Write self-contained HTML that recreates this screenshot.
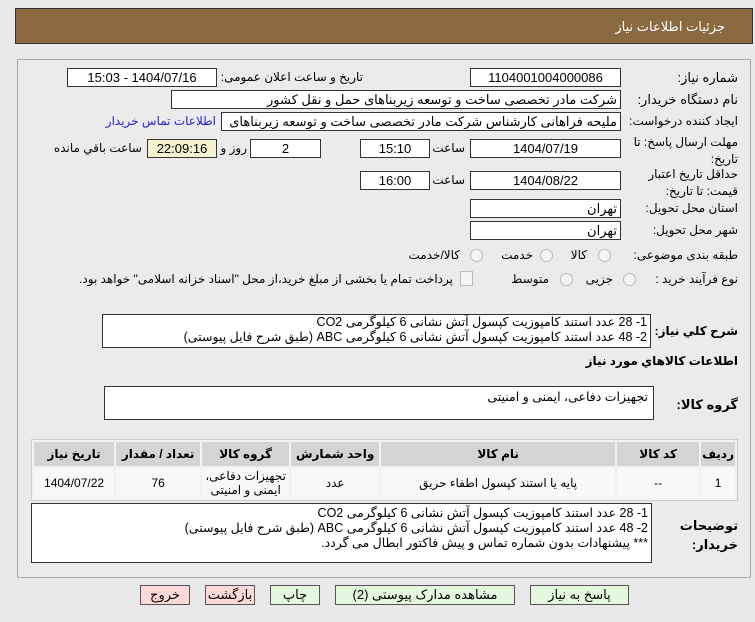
<!DOCTYPE html>
<html><head><meta charset="utf-8"><style>
body{margin:0;width:755px;height:622px;background:#e9e9e9;font-family:"Liberation Sans","DejaVu Sans",sans-serif;font-size:12px;color:#000;position:relative;overflow:hidden;direction:rtl}
.a{position:absolute;white-space:nowrap}
.in{position:absolute;background:#fff;border:1px solid #333;box-sizing:border-box;height:19px;line-height:17px;text-align:center;font-size:13px}
.l{position:absolute;white-space:nowrap;text-align:right;font-size:12px}
.rad{position:absolute;width:11px;height:11px;border-radius:50%;border:1px solid #bbb;background:#f4f4f4}
.btn{position:absolute;height:20px;line-height:18px;border:1px solid #555;box-sizing:border-box;text-align:center;font-size:13px}
.g{background:#e4f8e0}.p{background:#fcd9d9}
table{position:absolute;border-collapse:separate;border-spacing:2px;background:#f2f2f2;border:1px solid #ccc}
th{background:#d4d4d4;font-weight:bold;height:22px;font-size:12px}
td{background:#f8f8f8;text-align:center;height:26px;font-size:12px}
</style></head><body>
<div class="a" style="left:15px;top:8px;width:738px;height:36px;background:#8b6a41;border:1px solid #333;box-sizing:border-box"></div>
<div class="a" style="right:30px;top:19px;color:#fff;font-size:13px">جزئیات اطلاعات نیاز</div>
<div class="a" style="left:17px;top:59px;width:734px;height:519px;border:1px solid #aaa;background:#ebebeb;box-sizing:border-box"></div>

<div class="l" style="right:17px;top:70px;font-size:13px">شماره نیاز:</div>
<div class="in" style="left:470px;top:68px;width:151px">1104001004000086</div>
<div class="l" style="right:392px;top:70px">تاریخ و ساعت اعلان عمومی:</div>
<div class="in" style="left:67px;top:68px;width:150px">1404/07/16 - 15:03</div>

<div class="l" style="right:17px;top:92px;font-size:13px">نام دستگاه خریدار:</div>
<div class="in" style="left:171px;top:90px;width:450px;text-align:right;padding-right:3px">شرکت مادر تخصصی ساخت و توسعه زیربناهای حمل و نقل کشور</div>

<div class="l" style="right:17px;top:114px">ایجاد کننده درخواست:</div>
<div class="in" style="left:221px;top:112px;width:400px;text-align:right;padding-right:3px;overflow:hidden">ملیحه فراهانی کارشناس شرکت مادر تخصصی ساخت و توسعه زیربناهای حمل</div>
<div class="l" style="right:539px;top:114px;color:#2222dd">اطلاعات تماس خریدار</div>

<div class="l" style="right:17px;top:134px;line-height:17px">مهلت ارسال پاسخ: تا<br>تاریخ:</div>
<div class="in" style="left:470px;top:139px;width:151px">1404/07/19</div>
<div class="l" style="right:290px;top:141px">ساعت</div>
<div class="in" style="left:360px;top:139px;width:70px">15:10</div>
<div class="in" style="left:250px;top:139px;width:71px">2</div>
<div class="l" style="right:508px;top:141px">روز و</div>
<div class="in" style="left:147px;top:139px;width:70px;background:#f5f2cf">22:09:16</div>
<div class="l" style="right:613px;top:141px">ساعت باقي مانده</div>

<div class="l" style="right:17px;top:166px;line-height:17px">حداقل تاریخ اعتبار<br>قیمت: تا تاریخ:</div>
<div class="in" style="left:470px;top:171px;width:151px">1404/08/22</div>
<div class="l" style="right:290px;top:173px">ساعت</div>
<div class="in" style="left:360px;top:171px;width:70px">16:00</div>

<div class="l" style="right:17px;top:201px">استان محل تحویل:</div>
<div class="in" style="left:470px;top:199px;width:151px;text-align:right;padding-right:3px">تهران</div>
<div class="l" style="right:17px;top:223px">شهر محل تحویل:</div>
<div class="in" style="left:470px;top:221px;width:151px;text-align:right;padding-right:3px">تهران</div>

<div class="l" style="right:17px;top:248px">طبقه بندی موضوعی:</div>
<div class="rad" style="left:598px;top:249px"></div><div class="l" style="right:168px;top:248px">کالا</div>
<div class="rad" style="left:540px;top:249px"></div><div class="l" style="right:222px;top:248px">خدمت</div>
<div class="rad" style="left:470px;top:249px"></div><div class="l" style="right:295px;top:248px">کالا/خدمت</div>

<div class="l" style="right:17px;top:272px">نوع فرآیند خرید :</div>
<div class="rad" style="left:623px;top:273px"></div><div class="l" style="right:142px;top:272px">جزیی</div>
<div class="rad" style="left:560px;top:273px"></div><div class="l" style="right:206px;top:272px">متوسط</div>
<div class="a" style="left:460px;top:271px;width:11px;height:13px;border:1px solid #bbb;background:#f4f4f4"></div>
<div class="l" style="right:302px;top:272px">پرداخت تمام یا بخشی از مبلغ خرید،از محل "اسناد خزانه اسلامی" خواهد بود.</div>

<div class="l" style="right:17px;top:324px;font-weight:bold">شرح كلي نياز:</div>
<div class="a" style="left:102px;top:314px;width:549px;height:34px;background:#fff;border:1px solid #333;box-sizing:border-box;direction:rtl;text-align:right;padding-right:3px;font-size:12.5px;line-height:15px">1- 28 عدد استند کامپوزیت کپسول آتش نشانی 6 کیلوگرمی CO2<br>2- 48 عدد استند کامپوزیت کپسول آتش نشانی 6 کیلوگرمی ABC (طبق شرح فایل پیوستی)</div>
<div class="l" style="right:17px;top:354px;font-weight:bold">اطلاعات كالاهاي مورد نياز</div>

<div class="l" style="right:17px;top:397px;font-weight:bold;font-size:13px">گروه کالا:</div>
<div class="a" style="left:104px;top:386px;width:550px;height:34px;background:#fff;border:1px solid #333;box-sizing:border-box;text-align:right;padding:2px 5px;font-size:12.5px">تجهیزات دفاعی، ایمنی و امنیتی</div>

<table style="left:31px;top:439px;width:707px">
<tr><th style="width:26px">رديف</th><th style="width:80px">کد کالا</th><th style="width:232px">نام کالا</th><th style="width:86px">واحد شمارش</th><th style="width:85px">گروه کالا</th><th style="width:82px">تعداد / مقدار</th><th>تاریخ نیاز</th></tr>
<tr><td>1</td><td>--</td><td>پایه یا استند کپسول اطفاء حریق</td><td>عدد</td><td style="line-height:14px">تجهیزات دفاعی،<br>ایمنی و امنیتی</td><td>76</td><td>1404/07/22</td></tr>
</table>

<div class="l" style="right:17px;top:516px;font-weight:bold;font-size:13px;line-height:19px">توضیحات<br>خریدار:</div>
<div class="a" style="left:31px;top:503px;width:621px;height:60px;background:#fff;border:1px solid #333;box-sizing:border-box;text-align:right;padding-right:3px;font-size:12.5px;line-height:15px;padding-top:2px">1- 28 عدد استند کامپوزیت کپسول آتش نشانی 6 کیلوگرمی CO2<br>2- 48 عدد استند کامپوزیت کپسول آتش نشانی 6 کیلوگرمی ABC (طبق شرح فایل پیوستی)<br>*** پیشنهادات بدون شماره تماس و پیش فاکتور ابطال می گردد.</div>

<div class="btn g" style="left:530px;top:585px;width:99px">پاسخ به نیاز</div>
<div class="btn g" style="left:335px;top:585px;width:180px">مشاهده مدارک پیوستی (2)</div>
<div class="btn g" style="left:270px;top:585px;width:50px">چاپ</div>
<div class="btn p" style="left:205px;top:585px;width:50px">بازگشت</div>
<div class="btn p" style="left:140px;top:585px;width:50px">خروج</div>
</body></html>
